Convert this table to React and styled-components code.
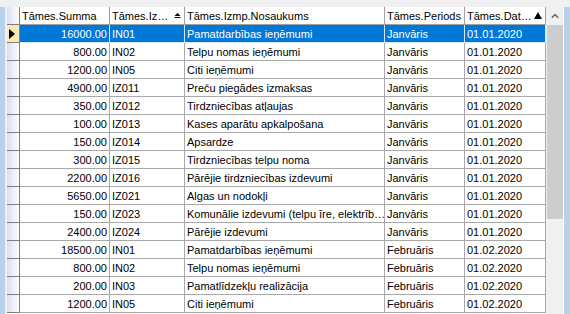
import React from 'react';
import styled, { createGlobalStyle } from 'styled-components';

const GlobalStyle = createGlobalStyle`
  html, body {
    margin: 0;
    padding: 0;
    background: #f0f0f0;
  }
  * {
    box-sizing: border-box;
  }
`;

const COLS = '13px 90px 75px 200px 80px 81px';

const rows = [
  ['16000.00', 'IN01', 'Pamatdarbības ieņēmumi', 'Janvāris', '01.01.2020'],
  ['800.00', 'IN02', 'Telpu nomas ieņēmumi', 'Janvāris', '01.01.2020'],
  ['1200.00', 'IN05', 'Citi ieņēmumi', 'Janvāris', '01.01.2020'],
  ['4900.00', 'IZ011', 'Preču piegādes izmaksas', 'Janvāris', '01.01.2020'],
  ['350.00', 'IZ012', 'Tirdzniecības atļaujas', 'Janvāris', '01.01.2020'],
  ['100.00', 'IZ013', 'Kases aparātu apkalpošana', 'Janvāris', '01.01.2020'],
  ['150.00', 'IZ014', 'Apsardze', 'Janvāris', '01.01.2020'],
  ['300.00', 'IZ015', 'Tirdzniecības telpu noma', 'Janvāris', '01.01.2020'],
  ['2200.00', 'IZ016', 'Pārējie tirdzniecības izdevumi', 'Janvāris', '01.01.2020'],
  ['5650.00', 'IZ021', 'Algas un nodokļi', 'Janvāris', '01.01.2020'],
  ['150.00', 'IZ023', 'Komunālie izdevumi (telpu īre, elektrīb…', 'Janvāris', '01.01.2020'],
  ['2400.00', 'IZ024', 'Pārējie izdevumi', 'Janvāris', '01.01.2020'],
  ['18500.00', 'IN01', 'Pamatdarbības ieņēmumi', 'Februāris', '01.02.2020'],
  ['800.00', 'IN02', 'Telpu nomas ieņēmumi', 'Februāris', '01.02.2020'],
  ['200.00', 'IN03', 'Pamatlīdzekļu realizācija', 'Februāris', '01.02.2020'],
  ['1200.00', 'IN05', 'Citi ieņēmumi', 'Februāris', '01.02.2020'],
];

const Window = styled.div`
  width: 570px;
  height: 314px;
  overflow: hidden;
  display: flex;
  flex-direction: column;
  background: #f0f0f0;
  font-family: Tahoma, "Liberation Sans", Arial, sans-serif;
  font-size: 11px;
  color: #000;
`;

const TopBand = styled.div`
  height: 7px;
  flex: none;
  background: #f0f0f0;
`;

const Body = styled.div`
  flex: 1;
  display: flex;
  min-height: 0;
`;

const SideStrip = styled.div`
  width: ${(p) => p.w}px;
  flex: none;
  background: #b9d1ea;
  border-${(p) => p.side}: ${(p) => p.edge}px solid ${(p) => p.edgeColor};
`;

const GridArea = styled.div`
  display: flex;
  flex-direction: column;
  width: 539px;
  flex: none;
  background: #fff;
`;

const Row = styled.div`
  display: grid;
  grid-template-columns: ${COLS};
  height: 18px;
  flex: none;
`;

const HeaderCell = styled.div`
  display: flex;
  align-items: center;
  justify-content: space-between;
  padding: 0 3px 0 2px;
  background: #fff;
  border-right: 1px solid #a0a0a0;
  border-bottom: 1px solid #a0a0a0;
  white-space: nowrap;
  overflow: hidden;
`;

const Indicator = styled.div`
  display: flex;
  align-items: center;
  padding-left: 2px;
  border-right: 1px solid #7f7f7f;
  border-bottom: 1px solid #7f7f7f;
  background: ${(p) =>
    p.current ? '#fde9b2' : 'linear-gradient(90deg, #d9ddf7 0%, #eef0fc 55%, #ffffff 100%)'};
`;

const Cell = styled.div`
  display: flex;
  align-items: center;
  justify-content: ${(p) => (p.right ? 'flex-end' : 'flex-start')};
  padding: ${(p) => (p.right ? '0 2px 0 0' : '0 0 0 2px')};
  white-space: nowrap;
  overflow: hidden;
  border-right: 1px solid ${(p) => (p.selected ? '#d6e8f8' : '#a9a9a9')};
  border-bottom: 1px solid ${(p) => (p.selected ? '#d6e8f8' : '#a9a9a9')};
  background: ${(p) => (p.selected ? '#0078d7' : '#fff')};
  color: ${(p) => (p.selected ? '#fff' : '#000')};
`;

const ScrollBar = styled.div`
  width: 17px;
  flex: none;
  display: flex;
  flex-direction: column;
  background: #f0f0f0;
  padding-left: 1px;
`;

const ScrollButton = styled.div`
  height: 18px;
  display: flex;
  align-items: center;
  justify-content: center;
`;

const Thumb = styled.div`
  height: 194px;
  background: #cdcdcd;
`;

const SortUp = ({ big }) =>
  big ? (
    <svg width="8" height="7" viewBox="0 0 8 7">
      <path d="M4 0 L8 7 L0 7 Z" fill="#000" />
    </svg>
  ) : (
    <svg width="7" height="6" viewBox="0 0 7 6">
      <path d="M3.5 0 L6.5 3 L0.5 3 Z" fill="#000" />
      <rect x="0.5" y="4" width="6" height="1" fill="#000" />
    </svg>
  );

const Pointer = () => (
  <svg width="6" height="10" viewBox="0 0 6 10">
    <path d="M0 0 L6 5 L0 10 Z" fill="#000" />
  </svg>
);

const Chevron = () => (
  <svg width="8" height="6" viewBox="0 0 8 6">
    <path d="M0.8 4.8 L4 1.6 L7.2 4.8" fill="none" stroke="#606060" strokeWidth="1.4" />
  </svg>
);

export default function App() {
  return (
    <Window>
      <GlobalStyle />
      <TopBand />
      <Body>
        <SideStrip w={7} side="right" edge={2} edgeColor="#f0f0f0" />
        <GridArea>
          <Row>
            <Indicator />
            <HeaderCell>Tāmes.Summa</HeaderCell>
            <HeaderCell>
              Tāmes.Iz…
              <SortUp />
            </HeaderCell>
            <HeaderCell>Tāmes.Izmp.Nosaukums</HeaderCell>
            <HeaderCell>Tāmes.Periods</HeaderCell>
            <HeaderCell>
              Tāmes.Dat…
              <SortUp big />
            </HeaderCell>
          </Row>
          {rows.map((r, i) => {
            const selected = i === 0;
            return (
              <Row key={i}>
                <Indicator current={selected}>{selected && <Pointer />}</Indicator>
                <Cell right selected={selected}>{r[0]}</Cell>
                <Cell selected={selected}>{r[1]}</Cell>
                <Cell selected={selected}>{r[2]}</Cell>
                <Cell selected={selected}>{r[3]}</Cell>
                <Cell selected={selected}>{r[4]}</Cell>
              </Row>
            );
          })}
        </GridArea>
        <ScrollBar>
          <ScrollButton>
            <Chevron />
          </ScrollButton>
          <Thumb />
        </ScrollBar>
        <SideStrip w={7} side="left" edge={1} edgeColor="#ffffff" />
      </Body>
    </Window>
  );
}
